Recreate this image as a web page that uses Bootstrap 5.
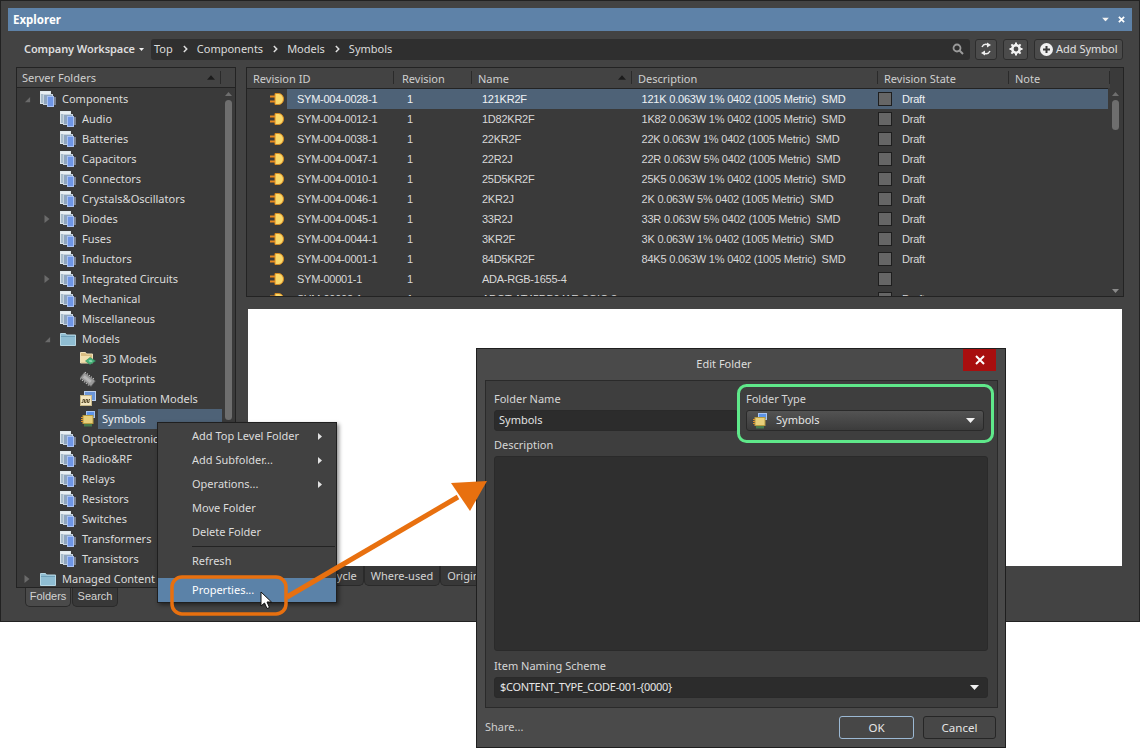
<!DOCTYPE html>
<html lang="en">
<head>
<meta charset="utf-8">
<title>Explorer</title>
<link href="https://cdn.jsdelivr.net/npm/bootstrap@5.3.0/dist/css/bootstrap.min.css" rel="stylesheet">
<style>
html,body{margin:0;background:#fff;overflow:hidden}
body{font-family:"Noto Sans","Open Sans",sans-serif;font-size:11px;color:#dcdcdc;letter-spacing:0}
.stage{position:relative;width:1140px;height:748px;overflow:hidden;background:#fff}
.ad-defs{position:absolute;width:0;height:0}
.ad-win{height:622px;background:#434343;border:1px solid #222;padding:7px 7px 0;width:1140px}
.ad-title{height:23px;flex:none;background:#5e82a8;color:#fff;font-weight:700;font-size:11.5px;padding:0 7px 0 5px}
.ad-title svg{display:block}
.ad-tgap{gap:9px}
.ad-bar{height:36px;flex:none;padding:0 9px 0 16px}
.ad-ws{font-weight:600;width:127px;color:#dedede;white-space:nowrap;letter-spacing:-.1px}
.ad-crumb{flex:1;height:21px;background:#2f2f2f;border-radius:3px;padding:0 6px 0 3px;color:#dcdcdc;margin-right:5px}
.ad-crumb svg.sep{margin:0 9px 0 10px}
.ad-tool{height:21px;background:#4b4b4b;border:1px solid #2d2d2d;border-radius:3px;color:#e2e2e2;padding:0;font-size:11px;flex:none}
.ad-tool:hover{background:#4b4b4b;color:#e2e2e2;border-color:#2d2d2d}
.ad-t1{width:22px}
.ad-t2{width:25px;margin-left:6px}
.ad-t3{width:89px;margin-left:6px;padding-left:5px;gap:3px}
.ad-main{padding:0 8px;gap:10px;height:540px;flex:none}
.ad-lcol{width:220px;flex:none}
.ad-left{height:521px;flex:none;background:#3a3a3a;border:1px solid #232323;overflow:hidden}
.ad-head{height:20px;flex:none;background:#434343;border-bottom:1px solid #232323;color:#cfcfcf;line-height:19px}
.ad-left .ad-head{padding:0 5px;position:relative}
.ad-sort{position:absolute;left:190px;top:7px}
.ad-hsep{position:absolute;left:203px;top:3px;width:1px;height:13px;background:#2a2a2a}
.ad-tree{flex:1;margin:1px 0 0;padding:0;list-style:none}
.ad-tree li{height:20px;line-height:20px;display:flex;align-items:center;white-space:nowrap}
.lv0{padding-left:3px}.lv1{padding-left:23px}.lv2{padding-left:43px}
.ad-car{width:20px;flex:none;display:flex;padding-left:4px}
.ad-tree svg.ic{width:16px;height:16px;flex:none;margin-right:2px}
.ad-lab{padding:0 4px;flex:1;height:20px}
.ad-tree li.sel .ad-lab{background:#4e6277;color:#eef2f6;margin-right:-2px}
.ad-sb{width:15px;flex:none;padding:4px 3px 0 4px;display:flex;flex-direction:column;align-items:center;gap:4px}
.ad-thumb{width:7px;background:#6e6e6e;border-radius:4px}
.ad-th1{height:320px}
.ad-th2{height:30px}
.ad-tabs{padding-left:9px;gap:1px}
.ad-tabs .ad-tab{font-family:"Liberation Sans",Arial,sans-serif;width:46px;padding:0;text-align:center}
.ad-tab{height:19px;line-height:17px;background:#383838;border:1px solid #2a2a2a;border-top:0;border-radius:0 0 5px 5px;padding:0 6px;color:#d4d4d4;white-space:nowrap}
.ad-tab.on{background:#4a4a4a}
.ad-right{flex:1;min-width:0}
.ad-grid{height:230px;background:#3a3a3a;border:1px solid #232323;overflow:hidden;position:relative;flex:none}
.ad-grid .table{--bs-table-bg:transparent;--bs-table-color:#d8d8d8;width:863px;table-layout:fixed;margin:0;border-collapse:collapse;font-family:"Liberation Sans",Arial,sans-serif;font-size:11px;letter-spacing:-.25px}
.ad-grid col:nth-child(1){width:40px}
.ad-grid col:nth-child(2){width:107px}
.ad-grid col:nth-child(3){width:78px}
.ad-grid col:nth-child(4){width:160px}
.ad-grid col:nth-child(5){width:246px}
.ad-grid col:nth-child(6){width:131px}
.ad-grid col:nth-child(7){width:101px}
.ad-grid .table td{padding:0 0 0 10px;height:20px;border:0;white-space:nowrap;overflow:hidden;vertical-align:middle;line-height:20px;box-shadow:none}
.ad-grid .table td.gut{padding:0 0 0 22px}
.ad-grid .table td.gut svg{display:block}
.ad-grid .table td.st{padding:0;letter-spacing:-.2px}
.ad-grid .table td.rv{padding-left:13px}
.ad-grid .table td.ds{padding-left:9.5px;letter-spacing:-.2px}
.ad-grid .table th{padding:0 0 0 6px;height:20px;background:#434343;border:0;border-bottom:1px solid #232323;font-family:"Noto Sans",sans-serif;font-size:11px;letter-spacing:0;font-weight:400;color:#cfcfcf;line-height:19px;box-shadow:none;position:relative}
.ad-grid .table th:nth-child(2){padding-left:8px}
.ad-grid .table th::after{content:"";position:absolute;right:0;top:3px;height:13px;width:1px;background:#2a2a2a}
.ad-thsort{position:absolute;right:6px;top:7px}
.ad-grid .table tr.sel td{background:#4e6277;color:#eef2f6}
.ad-grid .table tr.sel td.gut{background:transparent}
.ad-chk{display:inline-block;width:14px;height:14px;background:#666;border:1px solid #1e1e1e;vertical-align:-3px;margin-right:10px}
.ad-gsb{position:absolute;right:0;top:20px;width:15px;height:209px;background:#3a3a3a;padding:4px 4px 0;display:flex;flex-direction:column;align-items:center;gap:4px}
.ad-prev{height:257px;background:#fff;margin:12px 2px 0;flex:none}
.ad-rtabs{padding-left:60px;gap:0}
.ad-rtabs .ad-tab{padding:0 6px;height:20px;line-height:19px}
.ad-ctx{display:block;position:absolute;left:157px;top:422px;width:180px;height:181px;background:#414141;border:1px solid #1f1f1f;border-radius:0;padding:1px 0 0;margin:0;box-shadow:2px 2px 4px rgba(0,0,0,.45);font-size:11px;z-index:5}
.ad-ctx .dropdown-item{height:24px;line-height:24px;padding:0 14px 0 34px;color:#dcdcdc;display:flex;justify-content:space-between;align-items:center;background:transparent}
.ad-ctx .dropdown-divider{margin:2px 1px 2px 34px;border-top:1px solid #232323;opacity:1}
.ad-ctx .dropdown-item.hot{background:#5b82a8;color:#fff;margin-top:5px}
.ad-dlg{position:absolute;left:476px;top:348px;width:530px;height:400px;background:#4a4a4a;border:1px solid #1f1f1f;border-radius:0;color:#dcdcdc;z-index:6}
.ad-dhead{height:31px;line-height:29px;text-align:center;position:relative;color:#dedede;padding-right:34px;flex:none}
.ad-x{position:absolute;right:9px;top:0;width:33px;height:22px;background:#a80f0f;display:flex;align-items:center;justify-content:center;padding:0;border:0;border-radius:0}
.ad-x:hover{background:#a80f0f}
.ad-inner{margin:0 7px 0 8px;height:328px;flex:none;background:#3e3e3e;border:1px solid #2a2a2a;padding:11px 9px 0 8px}
.ad-lb{display:block;line-height:14px;height:14px;margin:0 0 4px;color:#d6d6d6}
.ad-lb.d1{margin-top:7px}
.ad-lb.d2{margin-top:8px}
.ad-frow{padding-right:4px;gap:8px}
.ad-fname{width:244px;flex:none}
.ad-inp{height:21px;background:#2c2c2c;border:1px solid #2a2a2a;border-radius:3px;padding:0 4px 2px;color:#e2e2e2;font-size:11px;box-shadow:none}
.ad-inp:focus{background:#2c2c2c;color:#e2e2e2;border-color:#2a2a2a;box-shadow:none}
.ad-area{height:195px;resize:none;background:#2f2f2f}
.ad-area:focus{background:#2f2f2f}
.ad-pick{height:21px;border:1px solid #2a2a2a;border-radius:3px;background:linear-gradient(#535353,#3c3c3c);padding:0 8px 0 5px;color:#e6e6e6}
.ad-pick.dk{background:#2c2c2c;letter-spacing:-.3px}
.ad-foot{padding:8px 9px 0 8px}
.ad-foot a{color:#cfcfcf;text-decoration:none}
.ad-btn{height:23px;width:75px;padding:0;background:#474747;border:1px solid #262626;border-radius:3px;color:#e6e6e6;font-size:11.5px;flex:none}
.ad-btn:hover{background:#474747;color:#e6e6e6;border-color:#262626}
.ad-btn.pri,.ad-btn.pri:hover{border-color:#9cb9d4}
.ad-btn.can{width:73px;margin-left:9px}
.ad-over{position:absolute;left:0;top:0;pointer-events:none;z-index:7}
</style>
</head>
<body>
<svg class="ad-defs" aria-hidden="true">
<defs>
<symbol id="stk" viewBox="0 0 16 16">
<rect x=".5" y=".5" width="10" height="12" fill="#a8bccb" stroke="#dbe4ea"/><rect x=".5" y=".5" width="10" height="2.500" fill="#e8eef2"/>
<rect x="3.500" y="3.500" width="9" height="10" fill="#8fa6c0" stroke="#c7d3de"/>
<rect x="7.500" y="5.500" width="6" height="10" fill="#6f96e6" stroke="#a9c2f3"/>
<path d="M14 7h2M14 9h2M14 11h2M14 13h2" stroke="#b9c9e8"/>
</symbol>
<symbol id="fld" viewBox="0 0 16 16">
<path d="M.5 2.500h5l1 1.500h9v10.500H.5z" fill="#8fbdd2" stroke="#b5d6e3"/><path d="M1 5.500h14" stroke="#6fa0b8"/>
</symbol>
<symbol id="f3d" viewBox="0 0 16 16">
<path d="M.5 1.500h5l1 1.500h6v9H.5z" fill="#d8bc80" stroke="#efe0b8"/>
<path d="M1 5h9l-1 6H1z" fill="#f0dfae"/>
<path d="M10 6.500l5.500 3.500-5.500 3.500-4.500-3.500z" fill="#46b27a" stroke="#2e8a58" stroke-width=".6"/><path d="M8.500 9.500h3l1 1h-3z" fill="#c8f0da"/>
</symbol>
<symbol id="fpt" viewBox="0 0 16 16">
<g transform="rotate(38 8 8)"><rect x="1" y="5" width="14" height="7" fill="#9a9a9a" stroke="#5c5c5c" stroke-width=".7"/><path d="M2 3.800v1.200M4.500 3.800v1.200M7 3.800v1.200M9.500 3.800v1.200M12 3.800v1.200M2 12v1.200M4.500 12v1.200M7 12v1.200M9.500 12v1.200M12 12v1.200" stroke="#c8c8c8"/><rect x="3" y="7" width="9" height="3" fill="#b8b8b8"/></g>
</symbol>
<symbol id="sim" viewBox="0 0 16 16">
<rect x="4.500" y=".5" width="11" height="9" fill="#6a95d8" stroke="#bcd0ee"/>
<rect x=".5" y="4.500" width="11" height="10" fill="#f3e6c0" stroke="#c8b888"/>
<path d="M1.500 11.500h1.500v-3h1.500v3h1.500v-3h1.500v3h1.500v-3h1" fill="none" stroke="#5e5030"/>
</symbol>
<symbol id="sym" viewBox="0 0 16 16">
<rect x="6.500" y=".5" width="8" height="6" fill="#5d93e6" stroke="#a8c6f2"/>
<rect x="3" y="4.500" width="10" height="8" fill="#e8cf7a" stroke="#b59a40"/>
<path d="M1 6.500h2M1 8.500h2M1 10.500h2" stroke="#e0902a"/>
<path d="M5 13v2.500M7 13v2.500M9 13v2.500M11 13v2.500" stroke="#55b860"/>
</symbol>
<symbol id="plg" viewBox="0 0 16 14">
<path d="M6 1.500h3.500c3 0 5 2.500 5 5.500s-2 5.500-5 5.500H6z" fill="#fbd96a" stroke="#d98a1e"/>
<path d="M1 4.500h5M1 9.500h5" stroke="#e8891e" stroke-width="2"/>
</symbol>
<symbol id="cr" viewBox="0 0 6 8"><path d="M.5 0 5.500 4 .5 8z" fill="#6a6a6a"/></symbol>
<symbol id="cd" viewBox="0 0 8 8"><path d="M7 1v6H1z" fill="#6a6a6a"/></symbol>
<symbol id="chev" viewBox="0 0 6 8"><path d="M1 .5 4.500 4 1 7.500" fill="none" stroke="#e0e0e0" stroke-width="1.800"/></symbol>
<symbol id="sub" viewBox="0 0 4 7"><path d="M0 0l4 3.500L0 7z" fill="#e2e2e2"/></symbol>
<symbol id="dn" viewBox="0 0 9 5"><path d="M0 0h9L4.500 5z" fill="#f2f2f2"/></symbol>
<symbol id="up" viewBox="0 0 9 5"><path d="M0 5h9L4.500 0z" fill="#6e6e6e"/></symbol>
<symbol id="upd" viewBox="0 0 9 5"><path d="M0 5h9L4.500 0z" fill="#1c1c1c"/></symbol>
</defs>
</svg>

<div class="stage">
  <div class="ad-win d-flex flex-column">
    <div class="ad-title d-flex align-items-center justify-content-between">
      <span>Explorer</span>
      <span class="d-flex align-items-center ad-tgap">
        <svg width="7" height="5" viewBox="0 0 9 5"><use href="#dn"/></svg>
        <svg width="7" height="7" viewBox="0 0 8 8"><path d="M1 1l6 6M7 1L1 7" stroke="#fff" stroke-width="2"/></svg>
      </span>
    </div>
    <div class="ad-bar d-flex align-items-center">
      <div class="ad-ws d-flex align-items-center">Company Workspace<svg class="ms-1" width="5" height="3" viewBox="0 0 9 5"><use href="#dn"/></svg></div>
      <div class="ad-crumb d-flex align-items-center">
        <span>Top</span><svg class="sep" width="5" height="8"><use href="#chev"/></svg><span>Components</span><svg class="sep" width="5" height="8"><use href="#chev"/></svg><span>Models</span><svg class="sep" width="5" height="8"><use href="#chev"/></svg><span>Symbols</span>
        <svg class="ms-auto" width="12" height="12" viewBox="0 0 12 12"><circle cx="5" cy="5" r="3.500" fill="none" stroke="#9a9a9a" stroke-width="1.800"/><path d="M7.500 7.500 11 11" stroke="#9a9a9a" stroke-width="2"/></svg>
      </div>
      <button class="btn ad-tool ad-t1 d-flex align-items-center justify-content-center" aria-label="Refresh">
        <svg width="12" height="14" viewBox="0 0 12 14"><path d="M2 5c1-2 3-3 5-2.500l1 .5" fill="none" stroke="#eee" stroke-width="1.500"/><path d="M7 .5 11 3 7 5.500z" fill="#eee"/><path d="M10 9c-1 2-3 3-5 2.500L4 11" fill="none" stroke="#eee" stroke-width="1.500"/><path d="M5 8.500 1 11l4 2.500z" fill="#eee"/></svg>
      </button>
      <button class="btn ad-tool ad-t2 d-flex align-items-center justify-content-center" aria-label="Settings">
        <svg width="14" height="14" viewBox="0 0 14 14"><circle cx="7" cy="7" r="3.700" fill="none" stroke="#f0f0f0" stroke-width="2.600"/><path d="M7 .5v2.500M7 11v2.500M.5 7H3M11 7h2.500M2.400 2.400l1.800 1.800M9.800 9.800l1.800 1.800M11.600 2.400 9.800 4.200M4.200 9.800l-1.800 1.800" stroke="#f0f0f0" stroke-width="2"/></svg>
      </button>
      <button class="btn ad-tool ad-t3 d-flex align-items-center">
        <svg width="13" height="13" viewBox="0 0 13 13"><circle cx="6.500" cy="6.500" r="6.500" fill="#f0f0f0"/><path d="M6.500 3v7M3 6.500h7" stroke="#3a3a3a" stroke-width="2"/></svg>Add Symbol
      </button>
    </div>
    <div class="ad-main d-flex">
      <div class="ad-lcol d-flex flex-column">
        <div class="ad-left d-flex flex-column">
          <div class="ad-head">Server Folders
            <svg class="ad-sort" width="8" height="5"><use href="#upd"/></svg><span class="ad-hsep"></span>
          </div>
          <div class="d-flex flex-grow-1">
            <ul class="ad-tree">
              <li class="lv0"><span class="ad-car"><svg width="7" height="7"><use href="#cd"/></svg></span><svg class="ic"><use href="#stk"/></svg><span class="ad-lab">Components</span></li>
              <li class="lv1"><span class="ad-car"></span><svg class="ic"><use href="#stk"/></svg><span class="ad-lab">Audio</span></li>
              <li class="lv1"><span class="ad-car"></span><svg class="ic"><use href="#stk"/></svg><span class="ad-lab">Batteries</span></li>
              <li class="lv1"><span class="ad-car"></span><svg class="ic"><use href="#stk"/></svg><span class="ad-lab">Capacitors</span></li>
              <li class="lv1"><span class="ad-car"></span><svg class="ic"><use href="#stk"/></svg><span class="ad-lab">Connectors</span></li>
              <li class="lv1"><span class="ad-car"></span><svg class="ic"><use href="#stk"/></svg><span class="ad-lab">Crystals&amp;Oscillators</span></li>
              <li class="lv1"><span class="ad-car"><svg width="6" height="8"><use href="#cr"/></svg></span><svg class="ic"><use href="#stk"/></svg><span class="ad-lab">Diodes</span></li>
              <li class="lv1"><span class="ad-car"></span><svg class="ic"><use href="#stk"/></svg><span class="ad-lab">Fuses</span></li>
              <li class="lv1"><span class="ad-car"></span><svg class="ic"><use href="#stk"/></svg><span class="ad-lab">Inductors</span></li>
              <li class="lv1"><span class="ad-car"><svg width="6" height="8"><use href="#cr"/></svg></span><svg class="ic"><use href="#stk"/></svg><span class="ad-lab">Integrated Circuits</span></li>
              <li class="lv1"><span class="ad-car"></span><svg class="ic"><use href="#stk"/></svg><span class="ad-lab">Mechanical</span></li>
              <li class="lv1"><span class="ad-car"></span><svg class="ic"><use href="#stk"/></svg><span class="ad-lab">Miscellaneous</span></li>
              <li class="lv1"><span class="ad-car"><svg width="7" height="7"><use href="#cd"/></svg></span><svg class="ic"><use href="#fld"/></svg><span class="ad-lab">Models</span></li>
              <li class="lv2"><span class="ad-car"></span><svg class="ic"><use href="#f3d"/></svg><span class="ad-lab">3D Models</span></li>
              <li class="lv2"><span class="ad-car"></span><svg class="ic"><use href="#fpt"/></svg><span class="ad-lab">Footprints</span></li>
              <li class="lv2"><span class="ad-car"></span><svg class="ic"><use href="#sim"/></svg><span class="ad-lab">Simulation Models</span></li>
              <li class="lv2 sel"><span class="ad-car"></span><svg class="ic"><use href="#sym"/></svg><span class="ad-lab">Symbols</span></li>
              <li class="lv1"><span class="ad-car"></span><svg class="ic"><use href="#stk"/></svg><span class="ad-lab">Optoelectronics</span></li>
              <li class="lv1"><span class="ad-car"></span><svg class="ic"><use href="#stk"/></svg><span class="ad-lab">Radio&amp;RF</span></li>
              <li class="lv1"><span class="ad-car"></span><svg class="ic"><use href="#stk"/></svg><span class="ad-lab">Relays</span></li>
              <li class="lv1"><span class="ad-car"></span><svg class="ic"><use href="#stk"/></svg><span class="ad-lab">Resistors</span></li>
              <li class="lv1"><span class="ad-car"></span><svg class="ic"><use href="#stk"/></svg><span class="ad-lab">Switches</span></li>
              <li class="lv1"><span class="ad-car"></span><svg class="ic"><use href="#stk"/></svg><span class="ad-lab">Transformers</span></li>
              <li class="lv1"><span class="ad-car"></span><svg class="ic"><use href="#stk"/></svg><span class="ad-lab">Transistors</span></li>
              <li class="lv0"><span class="ad-car"><svg width="6" height="8"><use href="#cr"/></svg></span><svg class="ic"><use href="#fld"/></svg><span class="ad-lab">Managed Content</span></li>
            </ul>
            <div class="ad-sb"><svg width="7" height="4"><use href="#up"/></svg><div class="ad-thumb ad-th1"></div></div>
          </div>
        </div>
        <div class="ad-tabs d-flex"><span class="ad-tab on">Folders</span><span class="ad-tab">Search</span></div>
      </div>
      <div class="ad-right d-flex flex-column">
        <div class="ad-grid">
          <table class="table">
            <colgroup><col><col><col><col><col><col><col></colgroup>
            <thead><tr><th colspan="2">Revision ID</th><th>Revision</th><th>Name<svg class="ad-thsort" width="8" height="5"><use href="#upd"/></svg></th><th>Description</th><th>Revision State</th><th>Note</th></tr></thead>
            <tbody>
              <tr class="sel"><td class="gut"><svg width="16" height="14"><use href="#plg"/></svg></td><td>SYM-004-0028-1</td><td class="rv">1</td><td>121KR2F</td><td class="ds">121K 0.063W 1% 0402 (1005 Metric)&nbsp; SMD</td><td class="st"><span class="ad-chk"></span>Draft</td><td></td></tr>
              <tr><td class="gut"><svg width="16" height="14"><use href="#plg"/></svg></td><td>SYM-004-0012-1</td><td class="rv">1</td><td>1D82KR2F</td><td class="ds">1K82 0.063W 1% 0402 (1005 Metric)&nbsp; SMD</td><td class="st"><span class="ad-chk"></span>Draft</td><td></td></tr>
              <tr><td class="gut"><svg width="16" height="14"><use href="#plg"/></svg></td><td>SYM-004-0038-1</td><td class="rv">1</td><td>22KR2F</td><td class="ds">22K 0.063W 1% 0402 (1005 Metric)&nbsp; SMD</td><td class="st"><span class="ad-chk"></span>Draft</td><td></td></tr>
              <tr><td class="gut"><svg width="16" height="14"><use href="#plg"/></svg></td><td>SYM-004-0047-1</td><td class="rv">1</td><td>22R2J</td><td class="ds">22R 0.063W 5% 0402 (1005 Metric)&nbsp; SMD</td><td class="st"><span class="ad-chk"></span>Draft</td><td></td></tr>
              <tr><td class="gut"><svg width="16" height="14"><use href="#plg"/></svg></td><td>SYM-004-0010-1</td><td class="rv">1</td><td>25D5KR2F</td><td class="ds">25K5 0.063W 1% 0402 (1005 Metric)&nbsp; SMD</td><td class="st"><span class="ad-chk"></span>Draft</td><td></td></tr>
              <tr><td class="gut"><svg width="16" height="14"><use href="#plg"/></svg></td><td>SYM-004-0046-1</td><td class="rv">1</td><td>2KR2J</td><td class="ds">2K 0.063W 5% 0402 (1005 Metric)&nbsp; SMD</td><td class="st"><span class="ad-chk"></span>Draft</td><td></td></tr>
              <tr><td class="gut"><svg width="16" height="14"><use href="#plg"/></svg></td><td>SYM-004-0045-1</td><td class="rv">1</td><td>33R2J</td><td class="ds">33R 0.063W 5% 0402 (1005 Metric)&nbsp; SMD</td><td class="st"><span class="ad-chk"></span>Draft</td><td></td></tr>
              <tr><td class="gut"><svg width="16" height="14"><use href="#plg"/></svg></td><td>SYM-004-0044-1</td><td class="rv">1</td><td>3KR2F</td><td class="ds">3K 0.063W 1% 0402 (1005 Metric)&nbsp; SMD</td><td class="st"><span class="ad-chk"></span>Draft</td><td></td></tr>
              <tr><td class="gut"><svg width="16" height="14"><use href="#plg"/></svg></td><td>SYM-004-0001-1</td><td class="rv">1</td><td>84D5KR2F</td><td class="ds">84K5 0.063W 1% 0402 (1005 Metric)&nbsp; SMD</td><td class="st"><span class="ad-chk"></span>Draft</td><td></td></tr>
              <tr><td class="gut"><svg width="16" height="14"><use href="#plg"/></svg></td><td>SYM-00001-1</td><td class="rv">1</td><td>ADA-RGB-1655-4</td><td></td><td class="st"><span class="ad-chk"></span></td><td></td></tr>
              <tr><td class="gut"><svg width="16" height="14"><use href="#plg"/></svg></td><td>SYM-00002-1</td><td class="rv">1</td><td>ADGT-AT45DB041E-SOIC-8</td><td></td><td class="st"><span class="ad-chk"></span>Draft</td><td></td></tr>
            </tbody>
          </table>
          <div class="ad-gsb"><svg width="7" height="4"><use href="#up"/></svg><div class="ad-thumb ad-th2"></div><svg class="mt-auto mb-1" width="7" height="4" viewBox="0 0 9 5"><path d="M0 0h9L4.500 5z" fill="#8a8a8a"/></svg></div>
        </div>
        <div class="ad-prev"></div>
        <div class="ad-rtabs d-flex"><span class="ad-tab">Lifecycle</span><span class="ad-tab">Where-used</span><span class="ad-tab">Origin</span></div>
      </div>
    </div>
  </div>

  <div class="dropdown-menu ad-ctx">
    <a class="dropdown-item" href="#">Add Top Level Folder<svg width="4" height="7"><use href="#sub"/></svg></a>
    <a class="dropdown-item" href="#">Add Subfolder...<svg width="4" height="7"><use href="#sub"/></svg></a>
    <a class="dropdown-item" href="#">Operations...<svg width="4" height="7"><use href="#sub"/></svg></a>
    <a class="dropdown-item" href="#">Move Folder</a>
    <a class="dropdown-item" href="#">Delete Folder</a>
    <hr class="dropdown-divider">
    <a class="dropdown-item" href="#">Refresh</a>
    <a class="dropdown-item hot" href="#">Properties...</a>
  </div>

  <div class="ad-dlg d-flex flex-column">
    <div class="ad-dhead">Edit Folder
      <button class="btn ad-x" aria-label="Close"><svg width="10" height="10" viewBox="0 0 10 10"><path d="M1 1l8 8M9 1l-8 8" stroke="#fff" stroke-width="2"/></svg></button>
    </div>
    <div class="ad-inner d-flex flex-column">
      <div class="d-flex ad-frow">
        <div class="ad-fname"><label class="ad-lb">Folder Name</label><input class="form-control ad-inp" value="Symbols"></div>
        <div class="flex-grow-1"><label class="ad-lb">Folder Type</label>
          <div class="ad-pick d-flex align-items-center"><svg width="16" height="16" class="me-2"><use href="#sym"/></svg><span>Symbols</span><svg class="ms-auto" width="9" height="5"><use href="#dn"/></svg></div>
        </div>
      </div>
      <label class="ad-lb d1">Description</label>
      <textarea class="form-control ad-inp ad-area"></textarea>
      <label class="ad-lb d2">Item Naming Scheme</label>
      <div class="ad-pick dk d-flex align-items-center"><span>$CONTENT_TYPE_CODE-001-{0000}</span><svg class="ms-auto" width="9" height="5"><use href="#dn"/></svg></div>
    </div>
    <div class="ad-foot d-flex align-items-center">
      <a href="#">Share...</a>
      <button class="btn ad-btn pri ms-auto">OK</button>
      <button class="btn ad-btn can">Cancel</button>
    </div>
  </div>

  <svg class="ad-over" width="1140" height="748" viewBox="0 0 1140 748" aria-hidden="true">
    <rect x="172" y="577" width="114" height="37" rx="10" fill="none" stroke="#e8700f" stroke-width="3.500"/>
    <path d="M287 597 458 497" stroke="#e8700f" stroke-width="5" fill="none"/>
    <path d="M451 483 487 481 470 511z" fill="#e8700f"/>
    <rect x="738.500" y="385.500" width="254" height="56" rx="8" fill="none" stroke="#5fe88a" stroke-width="3"/>
    <path d="M261 592v14l3.500-3 2.500 5.500 2.500-1-2.500-5.500h4.500z" fill="#fff" stroke="#111" stroke-width="1"/>
  </svg>
</div>
</body>
</html>
